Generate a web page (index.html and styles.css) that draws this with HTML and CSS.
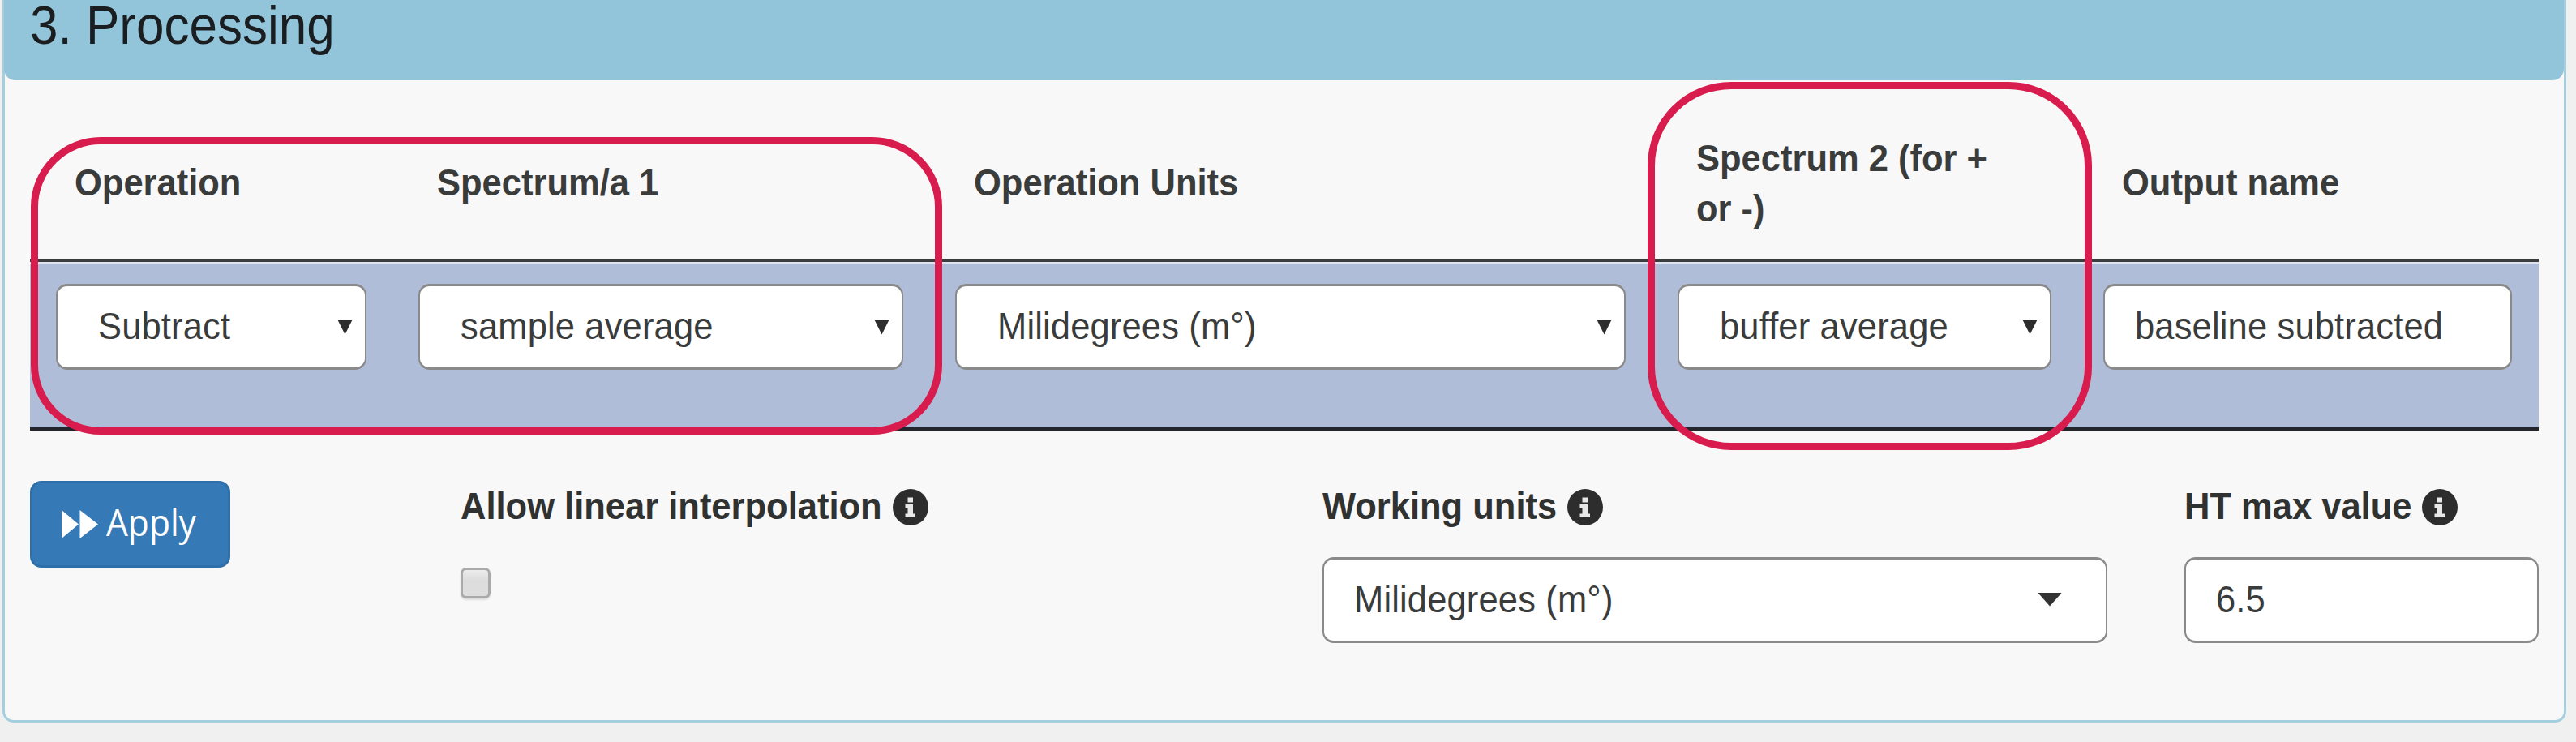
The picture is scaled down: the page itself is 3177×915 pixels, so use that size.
FILE: index.html
```html
<!DOCTYPE html>
<html lang="en">
<head>
<meta charset="utf-8">
<title>Processing</title>
<link rel="stylesheet" href="styles.css">
</head>
<body>
<svg class="defs" width="0" height="0">
  <symbol id="info" viewBox="0 0 44 45">
    <ellipse cx="22" cy="22.5" rx="22" ry="22.5" fill="#2d2d2d"/>
    <path d="M18.5 10.5h6.500v6h-6.500zM15.500 19h9.500v11.500h3v4.500h-12.500v-4.500h3v-7h-3z" fill="#e8e8e8"/>
  </symbol>
</svg>
<section class="panel">
  <header class="panel-head"><h1 class="title"><span class="t">3. Processing</span></h1></header>
  <div class="panel-body">
    <div class="table">
      <div class="row head">
        <div class="th"><span class="t">Operation</span></div>
        <div class="th"><span class="t">Spectrum/a 1</span></div>
        <div class="th"><span class="t">Operation Units</span></div>
        <div class="th"><span class="t">Spectrum 2 (for +<br>or -)</span></div>
        <div class="th"><span class="t">Output name</span></div>
      </div>
      <div class="row cells">
        <div class="box select"><span class="t">Subtract</span><i class="arrow"></i></div>
        <div class="box select"><span class="t">sample average</span><i class="arrow"></i></div>
        <div class="box select"><span class="t">Milidegrees (m°)</span><i class="arrow"></i></div>
        <div class="box select"><span class="t">buffer average</span><i class="arrow"></i></div>
        <div class="box"><span class="t">baseline subtracted</span></div>
      </div>
    </div>
    <div class="controls">
      <div class="apply">
        <svg width="45" height="35" viewBox="0 0 45 35"><path d="M0 0L21 17.500L0 35zM22.500 0L45 17.500L22.500 35z" fill="#fff"/></svg>
        <span class="t">Apply</span>
      </div>
      <div class="field">
        <div class="label"><span class="t">Allow linear interpolation</span><svg class="info"><use href="#info"/></svg></div>
        <div class="check"></div>
      </div>
      <div class="field">
        <div class="label"><span class="t">Working units</span><svg class="info"><use href="#info"/></svg></div>
        <div class="box units"><span class="t">Milidegrees (m°)</span><i class="arrow wide"></i></div>
      </div>
      <div class="field">
        <div class="label"><span class="t">HT max value</span><svg class="info"><use href="#info"/></svg></div>
        <div class="box"><span class="t">6.5</span></div>
      </div>
    </div>
  </div>
</section>
<div class="mark mark-left"></div>
<div class="mark mark-right"></div>
</body>
</html>
```
FILE: styles.css
```css
* { box-sizing: border-box; }
html { background: #f0f0f0; }
body {
  margin: 0;
  height: 915px;
  overflow: hidden;
  position: relative;
  font: 43.5px/57.5px "Liberation Sans", Arial, sans-serif;
  color: #3a3c3c;
}
.defs { position: absolute; }
.t { display: block; transform: scaleY(1.08); white-space: nowrap; }
.panel {
  margin-left: 3px;
  width: 3162px;
  height: 891px;
  background: #f8f8f8;
  border: 3px solid #a3cfdf;
  border-top: 0;
  border-radius: 0 0 14px 14px;
}
.panel-head {
  height: 99px;
  margin: 0 0 0 -1px;
  padding-left: 32px;
  background: #92c5da;
  border-radius: 0 0 14px 14px;
}
.title { margin: 0; font-size: 62px; line-height: 61px; font-weight: 400; color: #1a1e20; }
.panel-body { padding: 30px 31.500px 0 31px; }
.row { display: grid; grid-template-columns: 447px 662px 891px 525px 568px; }
.head {
  height: 194px;
  padding-top: 4px;
  border-bottom: 4px solid #3a3d3e;
  align-items: center;
  font-weight: 700;
}
.th { padding-left: 55px; }
.cells {
  height: 208px;
  padding-top: 25px;
  background: #b0bdd9;
  border-top: 2px solid #e0e3eb;
  border-bottom: 4px solid #24262c;
}
.cells .box { margin: 0 32px; }
.box {
  height: 106px;
  display: flex;
  align-items: center;
  padding: 0 15px 0 37px;
  background: #fff;
  border: 3px solid #8a8a8a;
  border-left-width: 2px;
  border-right-width: 2px;
  border-radius: 14px;
  letter-spacing: 0.15px;
}
.select { padding-left: 50px; justify-content: space-between; }
.arrow { width: 19px; height: 19px; background: #2d2d2d; clip-path: polygon(0 0, 100% 0, 50% 100%); }
.arrow.wide { width: 30px; height: 17px; margin: -2px 39px 0 0; background: #333; }
.units { justify-content: space-between; }
.controls {
  display: grid;
  grid-template-columns: 531px 1063px 1063px 436.500px;
  padding-top: 62px;
}
.apply {
  width: 247px;
  height: 107px;
  display: flex;
  align-items: center;
  gap: 10px;
  padding-left: 36px;
  background: #357ab7;
  border: 3px solid #2e6fa9;
  border-radius: 14px;
  color: #fff;
  font-family: "Open Sans", sans-serif;
  font-size: 42.500px;
}
.apply .t { margin-top: -5px; }
.label { height: 64px; display: flex; align-items: center; gap: 13px; font-weight: 700; color: #303232; }
.info { width: 44px; height: 45px; }
.field .box { margin-top: 30px; }
.field:nth-child(3) .box { width: 968px; }
.check {
  width: 37px;
  height: 38px;
  margin-top: 43px;
  border: 3px solid #aaa;
  border-radius: 7px;
  background: linear-gradient(#ececec, #dcdcdc 40%, #dedede);
  box-shadow: 0 2px 2px #ddd;
}
/* Highlight outlines lying over the table */
.mark { position: absolute; border: 9.500px solid #d91c4e; }
.mark-left { left: 37.500px; top: 169px; width: 1124.500px; height: 367px; border-radius: 86px; }
.mark-right { left: 2032px; top: 101px; width: 547.500px; height: 453.500px; border-radius: 103px; }
```
